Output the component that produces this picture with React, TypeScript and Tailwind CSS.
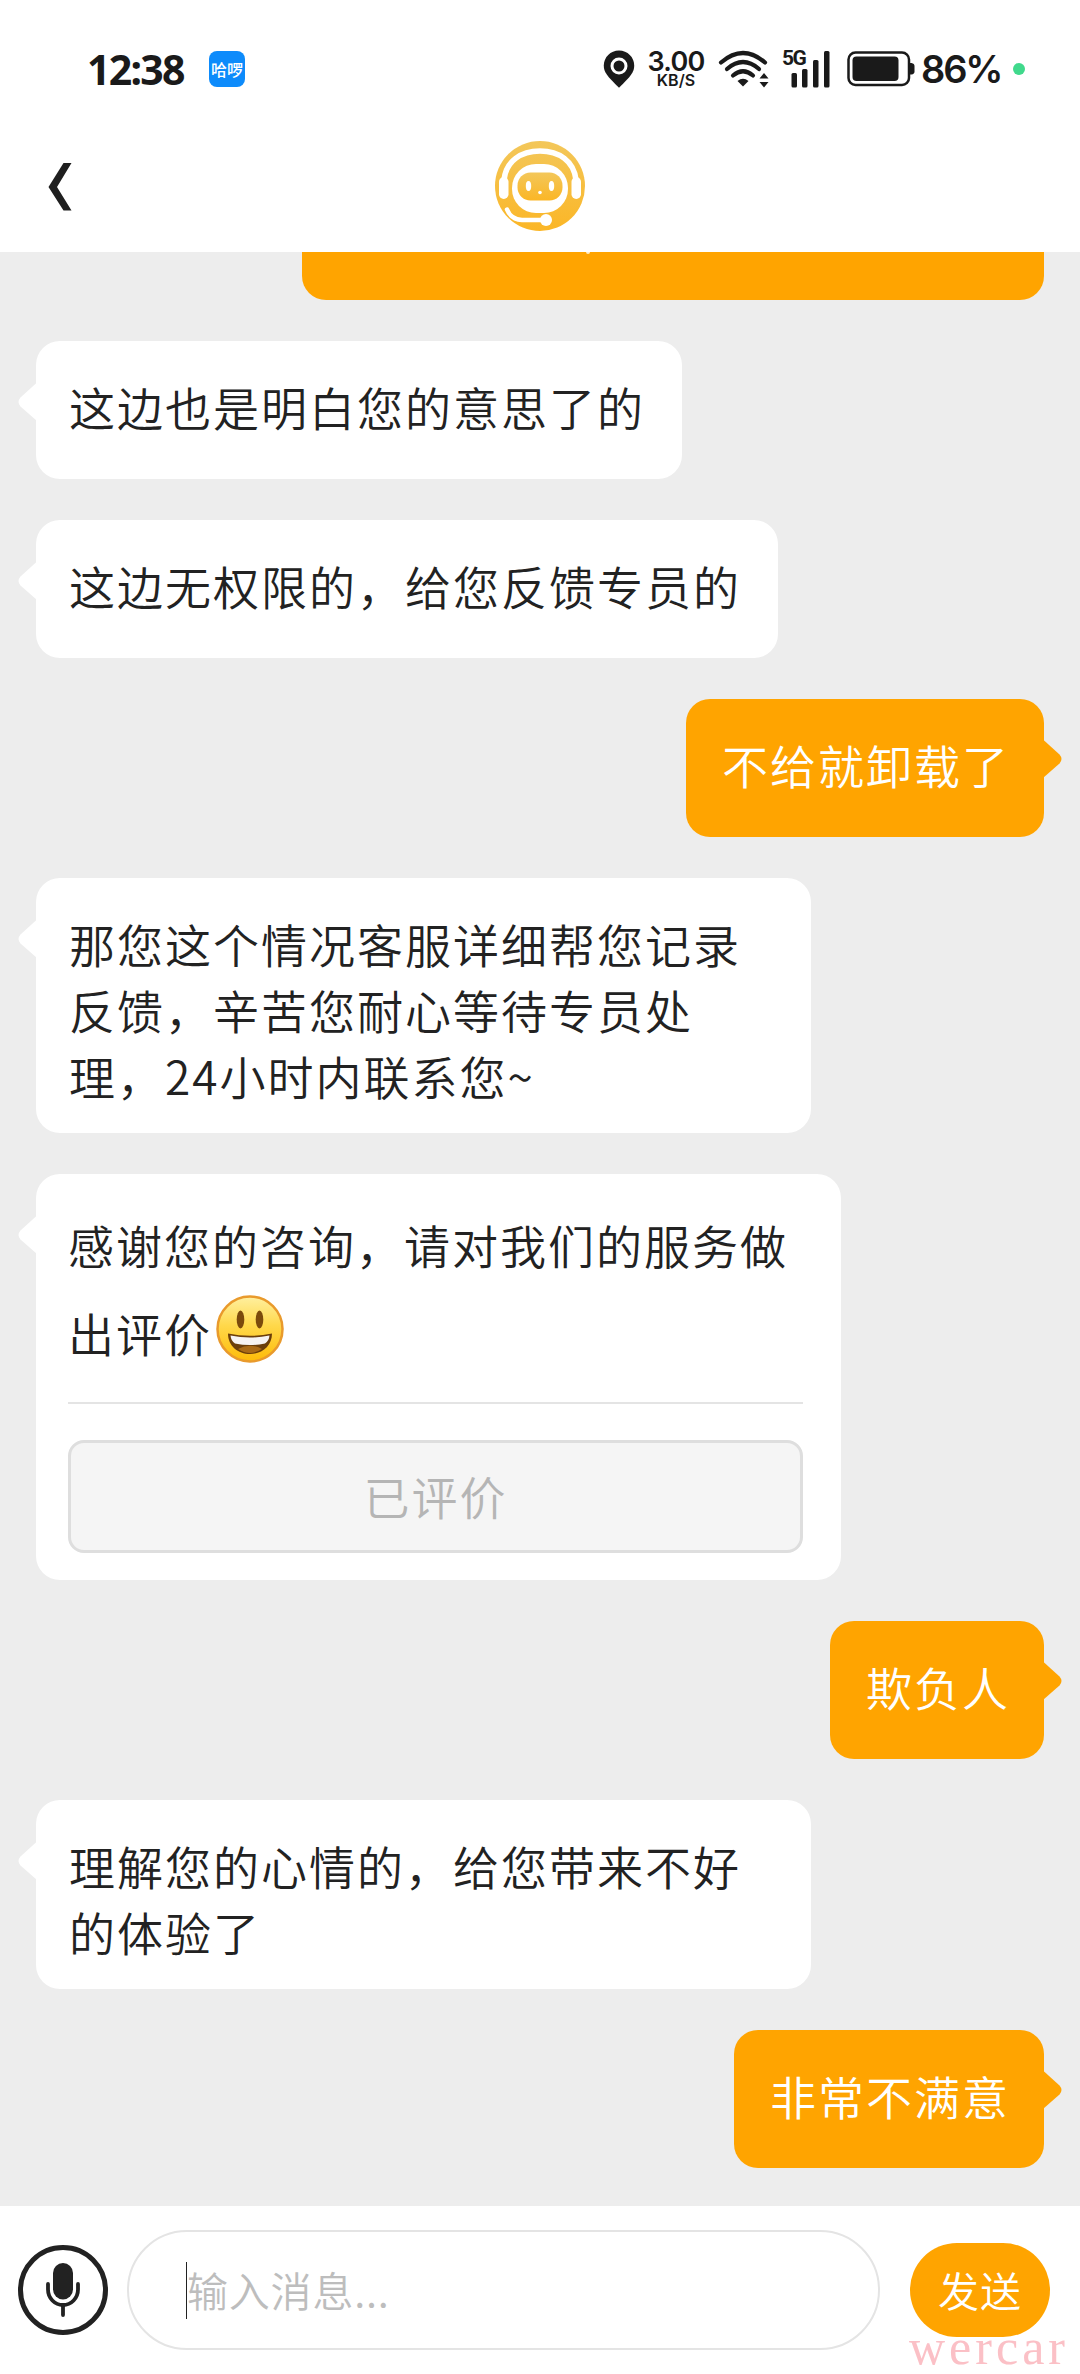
import type { ReactNode } from 'react';

type Message = { id: number; from: 'agent' | 'me'; text: string };

const before: Message[] = [
  { id: 1, from: 'agent', text: '这边也是明白您的意思了的' },
  { id: 2, from: 'agent', text: '这边无权限的，给您反馈专员的' },
  { id: 3, from: 'me', text: '不给就卸载了' },
  { id: 4, from: 'agent', text: '那您这个情况客服详细帮您记录反馈，辛苦您耐心等待专员处理，24小时内联系您~' },
];

const after: Message[] = [
  { id: 6, from: 'me', text: '欺负人' },
  { id: 7, from: 'agent', text: '理解您的心情的，给您带来不好的体验了' },
  { id: 8, from: 'me', text: '非常不满意' },
];

function StatusBar() {
  return (
    <div className="flex h-[138px] items-center pl-[87px] pr-[55px] text-[#1a1a1a]">
      <span className="w-[122px] whitespace-nowrap font-['Noto_Sans',sans-serif] text-[41px] font-bold leading-none tracking-[-1.7px]">12:38</span>
      <span className="flex h-9 w-9 items-center justify-center rounded-lg bg-[#0d8bfb] text-[16px] font-medium leading-none text-white">哈啰</span>

      <div className="ml-auto flex items-center">
        <svg width="32" height="38" viewBox="0 0 32 38" className="mr-[12px]">
          <path d="M16 .5C7.500.5.800 7.200.800 15.500c0 7 3.400 10.500 15.200 22.200C27.800 26 31.200 22.500 31.200 15.500 31.200 7.200 24.500.5 16 .5Z" fill="#1a1a1a" />
          <circle cx="16" cy="16" r="7" fill="none" stroke="#fff" strokeWidth="3" />
        </svg>
        <div className="mr-[13px] flex w-[58px] flex-col items-center font-['Inter',sans-serif] font-semibold">
          <span className="text-[27px] leading-[22px] tracking-[-0.8px]">3.00</span>
          <span className="text-[16px] leading-[15px]">KB/S</span>
        </div>
        <svg width="52" height="38" viewBox="0 0 52 38" className="mr-[12px]">
          <g fill="none" stroke="#1a1a1a" strokeWidth="4.200" strokeLinecap="round">
            <path d="M3 12.500Q25 -6.500 47 12.500" />
            <path d="M9 19Q25 5 41 19" />
            <path d="M15 25.500Q25 17 35 25.500" />
          </g>
          <path d="M19.500 31Q25 26.500 30.500 31L25 36.500Z" fill="#1a1a1a" />
          <path d="M41.500 28.500L46 23L50.500 28.500ZM41.500 32L46 37.500L50.500 32Z" fill="#1a1a1a" />
        </svg>
        <div className="relative mr-[17px] h-[38px] w-[48px]">
          <span className="absolute left-0 top-0 font-['Roboto',sans-serif] text-[21px] font-bold leading-[17px] tracking-[-1.5px]">5G</span>
          <svg width="48" height="38" viewBox="0 0 48 38">
            <g fill="#1a1a1a">
              <rect x="9.500" y="23" width="5.500" height="14.500" rx="1.500" />
              <rect x="20" y="19" width="5.500" height="18.500" rx="1.500" />
              <rect x="31" y="10" width="5.500" height="27.500" rx="1.500" />
              <rect x="42" y="1" width="5.500" height="36.500" rx="1.500" />
            </g>
          </svg>
        </div>
        <svg width="68" height="36" viewBox="0 0 68 36" className="mr-[6px]">
          <rect x="1.500" y="1.500" width="60.500" height="32.500" rx="7" fill="none" stroke="#1a1a1a" strokeWidth="2.500" />
          <rect x="5.500" y="5.500" width="46" height="24.500" rx="4" fill="#1a1a1a" />
          <path d="M63 12h1.500q3 .5 3 3v5.500q0 2.500-3 3H63Z" fill="#1a1a1a" />
        </svg>
        <span className="w-[92px] whitespace-nowrap font-['Inter',sans-serif] text-[38px] font-semibold leading-none tracking-[-2.2px]">86%</span>
        <span className="h-3 w-3 rounded-full bg-[#40d98c]" />
      </div>
    </div>
  );
}

function RobotAvatar() {
  return (
    <svg width="90" height="90" viewBox="0 0 90 90">
      <defs>
        <linearGradient id="avatar" x1="0" y1="0" x2="0" y2="1">
          <stop offset="0" stopColor="#f3c75a" />
          <stop offset="1" stopColor="#fbb626" />
        </linearGradient>
      </defs>
      <circle cx="45" cy="45" r="45" fill="url(#avatar)" />
      <path d="M9 39C11 20 26 10 45 10S79 20 81 39" fill="none" stroke="#fff" strokeWidth="5.500" />
      <rect x="4" y="36" width="9.500" height="22" rx="4.700" fill="#fff" />
      <rect x="76.500" y="36" width="9.500" height="22" rx="4.700" fill="#fff" />
      <rect x="17" y="23" width="56" height="49" rx="24" fill="#fff" />
      <rect x="22.500" y="31.500" width="45" height="28" rx="13" fill="url(#avatar)" />
      <ellipse cx="33.500" cy="45" rx="2.700" ry="5" fill="#fff" />
      <ellipse cx="56.500" cy="45" rx="2.700" ry="5" fill="#fff" />
      <circle cx="45" cy="51.500" r="1.800" fill="#fff" />
      <path d="M12 68.500Q16 78.500 27 79H49" fill="none" stroke="#fff" strokeWidth="4.500" strokeLinecap="round" />
      <circle cx="51" cy="79" r="6" fill="#fff" />
    </svg>
  );
}

function Smiley() {
  return (
    <svg width="68" height="68" viewBox="0 0 68 68" className="relative -top-[11px] left-1 inline-block align-middle">
      <defs>
        <linearGradient id="face" x1="0" y1="0" x2="0" y2="1">
          <stop offset="0" stopColor="#fff0a0" />
          <stop offset="0.45" stopColor="#ffd84a" />
          <stop offset="1" stopColor="#fdbb08" />
        </linearGradient>
      </defs>
      <circle cx="34" cy="34" r="32.500" fill="url(#face)" stroke="#e99a2c" strokeWidth="2.500" />
      <ellipse cx="24.500" cy="24.500" rx="3.800" ry="9" fill="#7b4a0c" />
      <ellipse cx="43.500" cy="24.500" rx="3.800" ry="9" fill="#7b4a0c" />
      <path d="M12 38.500Q34 43 56 38.500C56 51 46 59 34 59S12 51 12 38.500Z" fill="#6b3e0a" />
      <path d="M14.500 40.500Q34 44.500 53.500 40.500Q53 46 49 48.500Q34 51.500 19 48.500Q15 46 14.500 40.500Z" fill="#f6f3f2" />
      <path d="M22 54Q34 47.500 46 54Q34 62 22 54Z" fill="#a96a17" />
    </svg>
  );
}

function Tail({ side }: { side: 'left' | 'right' }) {
  return (
    <svg
      width="19"
      height="40"
      viewBox="0 0 19 40"
      className={side === 'left' ? 'absolute -left-[18px] top-[41px] -scale-x-100 text-white' : 'absolute -right-[18px] top-10 text-[#ffa400]'}
    >
      <path d="M0 0.500L16.500 15.500Q20.500 20 16.500 24.500L0 39Z" fill="currentColor" />
    </svg>
  );
}

function Bubble({ from, children }: { from: Message['from']; children: ReactNode }) {
  const mine = from === 'me';
  return (
    <div
      className={
        mine
          ? 'relative mr-9 min-h-[138px] self-end rounded-3xl bg-[#ffa400] pb-[25px] pl-9 pr-[34px] pt-8 text-white'
          : 'relative ml-9 min-h-[138px] max-w-[775px] self-start rounded-3xl bg-white pb-[25px] pl-[33px] pr-[37px] pt-8 text-[#222]'
      }
    >
      <Tail side={mine ? 'right' : 'left'} />
      <p className="text-[46px] leading-[66px] tracking-[2px]">{children}</p>
    </div>
  );
}

function RatingCard() {
  return (
    <div className="relative ml-9 flex h-[406px] w-[805px] flex-col self-start rounded-3xl bg-white pl-8 pr-[38px] pt-[26px] text-[#222]">
      <Tail side="left" />
      <div className="flex h-[202px] flex-col whitespace-nowrap text-[46px] leading-[88px] tracking-[2px]">
        <p className="h-[88px]">感谢您的咨询，请对我们的服务做</p>
        <p className="h-[88px]">
          出评价
          <Smiley />
        </p>
      </div>
      <div className="h-[2px] bg-[#e4e4e4]" />
      <button className="mt-[36px] h-[113px] rounded-2xl border-[3px] border-[#dedede] bg-[#f5f5f5] pb-[2px] text-[46px] tracking-[2px] text-[#b5b5b5]">
        已评价
      </button>
    </div>
  );
}

function Composer() {
  return (
    <div className="relative flex h-[168px] items-center bg-white pl-[18px] pr-[30px]">
      <svg width="90" height="90" viewBox="0 0 90 90" className="mr-[19px] shrink-0">
        <circle cx="45" cy="45" r="42.500" fill="none" stroke="#222" strokeWidth="5" />
        <rect x="35" y="18" width="20" height="36.500" rx="10" fill="#222" />
        <path d="M30 39V44.500a15 15.500 0 0 0 30 0V39M45 60V70" fill="none" stroke="#222" strokeWidth="3.800" strokeLinecap="round" />
      </svg>
      <div className="flex h-[120px] w-[753px] items-center rounded-full border-2 border-[#e4e4e4] pl-[57px]">
        <span className="h-[57px] w-px bg-[#222]" />
        <span className="text-[41px] tracking-[0.8px] text-[#bdbdbd]">输入消息...</span>
      </div>
      <button className="ml-auto h-[94px] w-[140px] rounded-full bg-[#ffa400] text-[41px] tracking-[1px] text-white">发送</button>
      <span className="absolute bottom-[3px] right-[11px] font-['Liberation_Serif',serif] text-[50px] leading-[48px] tracking-[4px] text-[#fbc0c6]">wercar</span>
    </div>
  );
}

export default function App() {
  return (
    <div className="flex h-[2374px] w-[1080px] flex-col overflow-hidden bg-white font-['Noto_Sans_CJK_SC',sans-serif] font-[350]">
      <StatusBar />
      <header className="relative flex h-[114px] items-start justify-center pt-[3px]">
        <svg width="24" height="48" viewBox="0 0 24 48" className="absolute left-12 top-[25px]">
          <path d="M15.500 0h8L9 24l14.500 23.500h-8L.5 24Z" fill="#1f1f1f" />
        </svg>
        <RobotAvatar />
      </header>

      <main className="flex flex-1 flex-col gap-[41px] bg-[#ededed]">
        {/* end of an earlier message, scrolled under the header */}
        <div className="mr-9 flex h-12 w-[742px] justify-center self-end rounded-b-3xl bg-[#ffa400] pr-[170px]">
          <span className="h-[2px] w-1 rounded-b bg-white/80" />
        </div>
        {before.map((m) => (
          <Bubble key={m.id} from={m.from}>{m.text}</Bubble>
        ))}
        <RatingCard />
        {after.map((m) => (
          <Bubble key={m.id} from={m.from}>{m.text}</Bubble>
        ))}
      </main>

      <Composer />
    </div>
  );
}
